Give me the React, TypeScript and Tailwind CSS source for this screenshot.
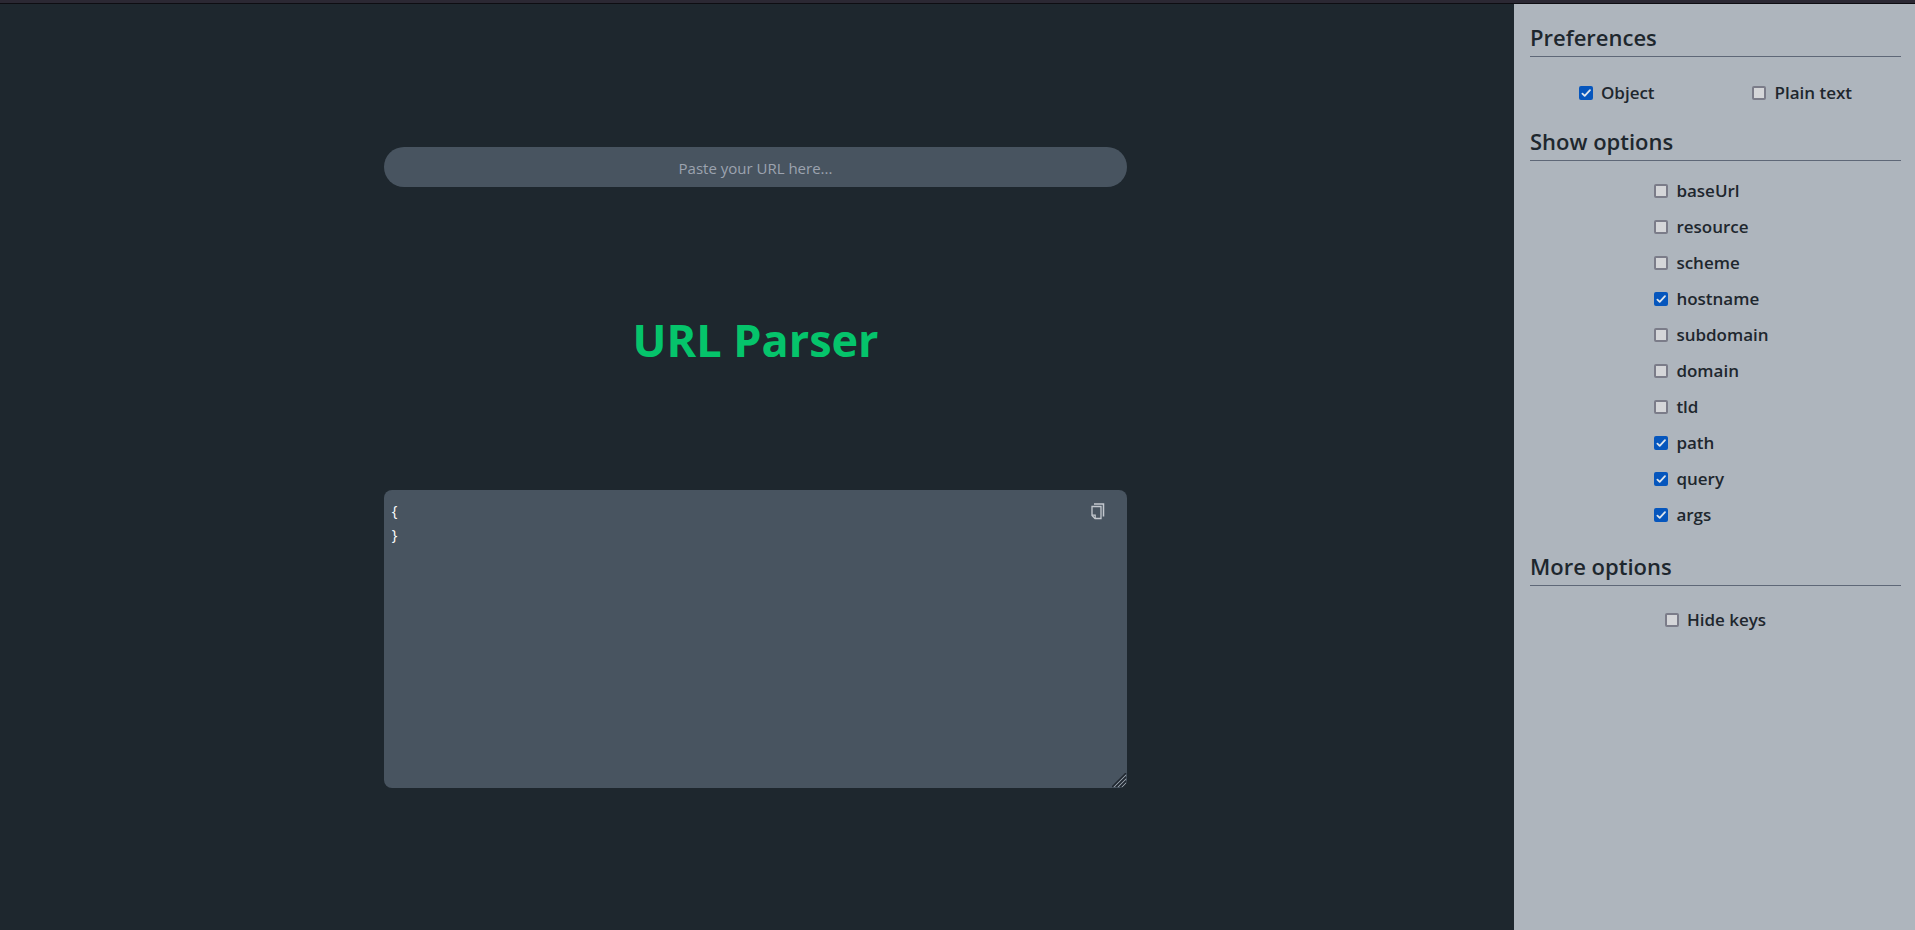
import { useState } from "react";

type OptionProps = {
  label: string;
  checked: boolean;
  onChange: () => void;
};

function Option({ label, checked, onChange }: OptionProps) {
  return (
    <label className="flex items-center gap-2 text-[17px] leading-6 font-semibold">
      <span className="grid size-3.5 shrink-0">
        <input
          type="checkbox"
          checked={checked}
          onChange={onChange}
          className="col-start-1 row-start-1 size-3.5 appearance-none rounded-xs border-2 border-[#7b7c89] bg-[#d5d6d9] checked:border-[#0656bd] checked:bg-[#0656bd]"
        />
        {checked && (
          <svg viewBox="0 0 14 14" className="pointer-events-none col-start-1 row-start-1 size-3.5" aria-hidden="true">
            <path d="M3.4 7.6 5.7 9.9 11 4.1" fill="none" stroke="#dfe5ec" strokeWidth="1.8" strokeLinecap="round" strokeLinejoin="round" />
          </svg>
        )}
      </span>
      {label}
    </label>
  );
}

function Heading({ children }: { children: string }) {
  return <h2 className="border-b border-[#5e6777] pt-px pb-[3px] text-[22px] leading-8 font-semibold">{children}</h2>;
}

const fields = ["baseUrl", "resource", "scheme", "hostname", "subdomain", "domain", "tld", "path", "query", "args"];

export default function App() {
  const [url, setUrl] = useState("");
  const [output, setOutput] = useState("{\n}");
  const [format, setFormat] = useState("object");
  const [hideKeys, setHideKeys] = useState(false);
  const [shown, setShown] = useState<string[]>(["hostname", "path", "query", "args"]);

  const toggle = (name: string) =>
    setShown((list) => (list.includes(name) ? list.filter((n) => n !== name) : [...list, name]));

  return (
    <div className="flex min-h-screen flex-col border-t-3 border-[#2b2833] bg-[#1e272e] font-['Open_Sans','Noto_Sans',sans-serif]">
      <div className="flex grow border-t border-[#0e0d12]">
        <main className="flex grow flex-col items-center pt-[143px] pr-[3px]">
          <input
            type="text"
            aria-label="URL"
            value={url}
            onChange={(e) => setUrl(e.target.value)}
            placeholder="Paste your URL here..."
            className="h-10 w-[49.2%] rounded-full bg-[#485460] px-4 pt-0.5 text-center text-[15px] text-white outline-none placeholder:text-[#9ca3af]"
          />
          <h1 className="pt-[122px] pb-[120px] text-[45px] leading-[61px] font-bold text-[#05c46b]">URL Parser</h1>
          <div className="relative w-[49.2%]">
            <textarea
              aria-label="Parsed URL"
              value={output}
              onChange={(e) => setOutput(e.target.value)}
              className="block h-[298px] w-full resize-none rounded-lg bg-[#485460] p-2 text-[15px] leading-6 text-white outline-none"
            />
            <button type="button" aria-label="Copy" className="absolute top-[11px] right-[19px] grid size-5 place-items-center text-[#c3c8ce]">
              <svg viewBox="0 0 16 18" className="h-[18px] w-4" fill="none" stroke="currentColor" aria-hidden="true">
                <path d="M4 2h9.500v12.500" strokeWidth="1.500" />
                <path d="M2 4.500h9v12H5L2 13.500z" strokeWidth="1.300" />
                <path d="M2 13.200H5.200v3.300" strokeWidth="1.200" />
              </svg>
            </button>
            <svg viewBox="0 0 15 15" className="pointer-events-none absolute right-0 bottom-0 size-[15px]" aria-hidden="true">
              <path d="M0 14 14 0M4 14l10-10M8 14l6-6M12 14l2-2" stroke="#20272e" strokeWidth="1.4" />
              <path d="M2 14 14 2M6 14l8-8M10 14l4-4" stroke="#8f979f" strokeWidth="1" />
            </svg>
          </div>
        </main>

        <aside className="w-[401px] shrink-0 bg-[#aeb5bd] pt-4 pr-3.5 pl-4 text-[#1e272e]">
          <Heading>Preferences</Heading>
          <div className="flex justify-around pt-6 pb-[19px]">
            <Option label="Object" checked={format === "object"} onChange={() => setFormat("object")} />
            <Option label="Plain text" checked={format === "plain"} onChange={() => setFormat("plain")} />
          </div>
          <Heading>Show options</Heading>
          <div className="flex justify-center pt-[18px] pr-2 pb-[22px]">
            <div className="flex flex-col gap-3">
              {fields.map((name) => (
                <Option key={name} label={name} checked={shown.includes(name)} onChange={() => toggle(name)} />
              ))}
            </div>
          </div>
          <Heading>More options</Heading>
          <div className="flex justify-center pt-[22px]">
            <Option label="Hide keys" checked={hideKeys} onChange={() => setHideKeys(!hideKeys)} />
          </div>
        </aside>
      </div>
    </div>
  );
}
